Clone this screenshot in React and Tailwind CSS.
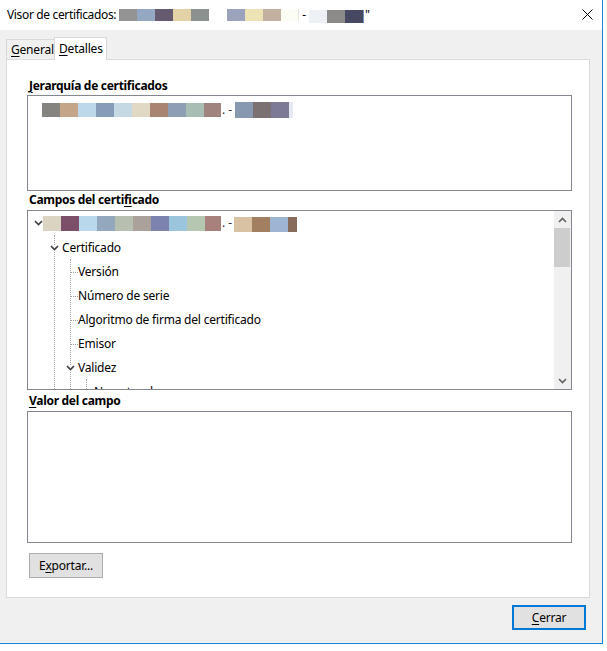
import React from "react";

const Chevron = ({ className = "" }) => (
  <svg width="9" height="6" viewBox="0 0 9 6" className={className}>
    <polyline points="1,1 4.5,4.5 8,1" fill="none" stroke="#3c3c3c" strokeWidth="1.6" />
  </svg>
);

const ArrowUp = () => (
  <svg width="9" height="6" viewBox="0 0 9 6">
    <polyline points="1,5 4.5,1.5 8,5" fill="none" stroke="#606060" strokeWidth="1.6" />
  </svg>
);
const ArrowDown = () => (
  <svg width="9" height="6" viewBox="0 0 9 6">
    <polyline points="1,1 4.5,4.5 8,1" fill="none" stroke="#606060" strokeWidth="1.6" />
  </svg>
);

const Blocks = ({ items, h }) => (
  <span className="inline-flex">
    {items.map((c, i) => (
      <span key={i} className={`inline-block ${h} ${c}`} />
    ))}
  </span>
);

const titleA = ["w-[18px] bg-[#939393]", "w-[18px] bg-[#94a8c4]", "w-[18px] bg-[#655a70]", "w-[18px] bg-[#e2d2a6]", "w-[18px] bg-[#8a918e]"];
const titleB = ["w-[18px] bg-[#9aa3bb]", "w-[18px] bg-[#ede2b4]", "w-[18px] bg-[#c1b0a0]", "w-[17px] bg-[#fbfcf3]", "w-[1px] bg-[#e6e6dc]"];
const titleC = ["w-[18px] bg-[#edf0f4]", "w-[18px] bg-[#8c8a89]", "w-[18px] bg-[#474862]", "w-[1px] bg-[#6d8fc0]"];

const hierA = ["w-[18px] bg-[#858480]", "w-[18px] bg-[#c4a587]", "w-[18px] bg-[#bed8eb]", "w-[18px] bg-[#869db9]", "w-[18px] bg-[#c4d9e4]", "w-[18px] bg-[#e2d9c4]", "w-[18px] bg-[#aa8473]", "w-[18px] bg-[#8f9fb3]", "w-[18px] bg-[#a8beb4]", "w-[17px] bg-[#a0827f]"];
const hierB = ["w-[18px] bg-[#8799b0]", "w-[18px] bg-[#7b7072]", "w-[18px] bg-[#7d7a96]", "w-[4px] bg-[#e4e9f2]"];

const treeA = ["w-[18px] bg-[#dbd4c2]", "w-[18px] bg-[#7c5068]", "w-[18px] bg-[#bad8eb]", "w-[18px] bg-[#94a8bd]", "w-[18px] bg-[#b6bfb0]", "w-[18px] bg-[#a9a19a]", "w-[18px] bg-[#7c83ae]", "w-[18px] bg-[#9bc4dd]", "w-[18px] bg-[#b5c7b0]", "w-[16px] bg-[#a8807c]"];
const treeB = ["w-[18px] bg-[#d9c1a4]", "w-[18px] bg-[#a37f62]", "w-[18px] bg-[#9db4d2]", "w-[9px] bg-[#876c5b]"];

const leaves = ["Versión", "Número de serie", "Algoritmo de firma del certificado", "Emisor"];

export default function App() {
  return (
    <div className="w-[607px] h-[651px] bg-white font-['Noto_Sans',sans-serif] text-[12px] leading-[16px] text-black overflow-hidden">
      <div className="w-[603px] h-[644px] border-r border-b border-[#1883d7] bg-[#f0f0f0] flex flex-col">
        {/* Title bar */}
        <div className="h-[30px] bg-white flex items-center pl-[7px] relative">
          <span className="tracking-[-0.35px]">Visor de certificados:</span>
          <span className="ml-[3px] flex items-center">
            <Blocks items={titleA} h="h-[12px]" />
            <span className="w-[18px]" />
            <Blocks items={titleB} h="h-[12px]" />
            <span className="mx-[3px]">-</span>
            <span className="mt-[3px] flex">
              <Blocks items={titleC} h="h-[13px]" />
            </span>
            <span className="ml-[1px]">"</span>
          </span>
          <svg width="11" height="11" viewBox="0 0 11 11" className="absolute left-[582px] top-[9px]">
            <path d="M0.5 0.5 L10.5 10.5 M10.5 0.5 L0.5 10.5" stroke="#000" strokeWidth="1" />
          </svg>
        </div>

        {/* Tabs */}
        <div className="h-[29px] flex items-end pl-[6px] relative z-10">
          <div className="h-[20px] w-[48px] border-l border-t border-[#d9d9d9] flex items-start pt-[2px] pl-[4px] tracking-[-0.2px]">
            <span><span className="underline underline-offset-2">G</span>eneral</span>
          </div>
          <div className="h-[23px] w-[53px] -mb-px bg-white border-x border-t border-[#d9d9d9] flex items-start pt-[3px] pl-[4px] tracking-[-0.2px]">
            <span><span className="underline underline-offset-2">D</span>etalles</span>
          </div>
        </div>

        {/* Panel */}
        <div className="ml-[6px] w-[584px] h-[539px] border border-[#d9d9d9] bg-white flex flex-col">
          <div className="mt-[18px] pl-[22px] h-[16px] font-bold tracking-[-0.3px]">
            <span className="underline underline-offset-2">J</span>erarquía de certificados
          </div>
          <div className="mt-[1px] ml-[20px] w-[545px] h-[96px] border border-[#828790] bg-white">
            <div className="mt-[6px] ml-[14px] flex items-center">
              <Blocks items={hierA} h="h-[14px]" />
              <span className="ml-[1px] text-[#333]">. -</span>
              <span className="ml-[3px] flex">
                <Blocks items={hierB} h="h-[16px]" />
              </span>
            </div>
          </div>

          <div className="mt-[1px] pl-[22px] h-[16px] font-bold tracking-[-0.3px]">
            Campos del certi<span className="underline underline-offset-2">fi</span>cado
          </div>
          <div className="mt-[2px] ml-[20px] w-[545px] h-[180px] border border-[#828790] bg-white flex">
            <div className="relative flex-1 overflow-hidden">
              {/* tree lines */}
              <span className="absolute left-[26px] top-[24px] h-[200px] border-l border-dotted border-[#a0a0a0]" />
              <span className="absolute left-[42px] top-[48px] h-[200px] border-l border-dotted border-[#a0a0a0]" />
              <span className="absolute left-[58px] top-[168px] h-[40px] border-l border-dotted border-[#a0a0a0]" />

              <div className="flex flex-col">
                <div className="h-[24px] flex items-center pl-[6px]">
                  <Chevron />
                  <span className="flex items-center">
                    <Blocks items={treeA} h="h-[15px]" />
                    <span className="ml-[1px] text-[#333]">. -</span>
                    <span className="ml-[2px] mt-[3px] flex">
                      <Blocks items={treeB} h="h-[15px]" />
                    </span>
                  </span>
                </div>
                <div className="h-[24px] mt-[1px] flex items-center pl-[22px]">
                  <Chevron className="relative z-10 bg-white" />
                  <span className="ml-[3px] tracking-[-0.2px]">Certificado</span>
                </div>
                {leaves.map((t) => (
                  <div key={t} className="h-[24px] flex items-center pl-[43px]">
                    <span className="w-[7px] border-t border-dotted border-[#a0a0a0]" />
                    <span className="tracking-[-0.2px]">{t}</span>
                  </div>
                ))}
                <div className="h-[24px] flex items-center pl-[38px]">
                  <Chevron className="relative z-10 bg-white" />
                  <span className="ml-[3px] tracking-[-0.2px]">Validez</span>
                </div>
                <div className="h-[24px] flex items-center pl-[59px]">
                  <span className="w-[7px] border-t border-dotted border-[#a0a0a0]" />
                  <span className="tracking-[-0.2px]">No antes de</span>
                </div>
              </div>
            </div>
            {/* scrollbar */}
            <div className="w-[17px] bg-[#f0f0f0] flex flex-col">
              <div className="h-[17px] flex items-center justify-center">
                <ArrowUp />
              </div>
              <div className="h-[39px] bg-[#cdcdcd] mr-[1px]" />
              <div className="flex-1" />
              <div className="h-[17px] flex items-center justify-center">
                <ArrowDown />
              </div>
            </div>
          </div>

          <div className="mt-[3px] pl-[22px] h-[16px] font-bold tracking-[-0.3px]">
            <span className="underline underline-offset-2">V</span>alor del campo
          </div>
          <div className="mt-[2px] ml-[20px] w-[545px] h-[132px] border border-[#828790] bg-white" />

          <button className="mt-[10px] ml-[22px] w-[74px] h-[25px] border border-[#adadad] bg-[#e1e1e1] flex items-center justify-center tracking-[-0.2px]">
            <span>E<span className="underline underline-offset-2">x</span>portar...</span>
          </button>
        </div>

        {/* Footer */}
        <div className="flex justify-end pr-[16px] mt-[7px]">
          <button className="w-[74px] h-[25px] border-2 border-[#0078d7] bg-[#e1e1e1] flex items-center justify-center tracking-[-0.2px]">
            <span><span className="underline underline-offset-2">C</span>errar</span>
          </button>
        </div>
      </div>
    </div>
  );
}
